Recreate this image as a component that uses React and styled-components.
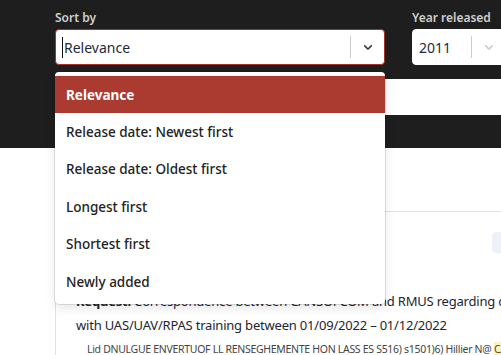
import React from "react";
import styled, { createGlobalStyle } from "styled-components";

const Global = createGlobalStyle`
  html, body {
    margin: 0;
    padding: 0;
    background: #ffffff;
    overflow: hidden;
  }
  body {
    font-family: "Noto Sans", "Open Sans", sans-serif;
    color: #222;
  }
`;

const SORT_OPTIONS = [
  "Relevance",
  "Release date: Newest first",
  "Release date: Oldest first",
  "Longest first",
  "Shortest first",
  "Newly added",
];

const Page = styled.div`
  position: relative;
  width: 501px;
  height: 355px;
  overflow: hidden;
`;

const Header = styled.header`
  background: #1e1e1e;
  height: 148px;
  padding: 10px 0 0 55px;
  box-sizing: border-box;
`;

const Filters = styled.div`
  display: flex;
  gap: 27px;
`;

const Field = styled.div`
  display: flex;
  flex-direction: column;
  gap: 3px;
  flex: 0 0 ${({ width }) => width}px;
`;

const Label = styled.label`
  font-size: 12px;
  font-weight: 600;
  color: #cfcfcf;
  line-height: 16px;
`;

const Select = styled.div`
  display: flex;
  align-items: center;
  height: 36px;
  box-sizing: border-box;
  background: #fff;
  border-radius: 4px;
  border: 1px solid ${({ focused }) => (focused ? "#a3312a" : "#fff")};
  padding-left: 6px;
`;

const Value = styled.div`
  flex: 1;
  display: flex;
  align-items: center;
  font-size: 14px;
  color: #1f2a3a;
`;

const Caret = styled.span`
  width: 1px;
  height: 21px;
  background: #111;
  margin-right: 1px;
`;

const Separator = styled.span`
  width: 1px;
  height: 22px;
  background: #cccccc;
`;

const Indicator = styled.span`
  width: 33px;
  display: flex;
  justify-content: center;
  align-items: center;
  color: ${({ muted }) => (muted ? "#cccccc" : "#333")};
`;

const SearchBar = styled.div`
  margin-top: 14px;
  height: 36px;
  background: #fff;
`;

const Menu = styled.ul`
  position: absolute;
  top: 72px;
  left: 55px;
  width: 330px;
  margin: 0;
  padding: 4px 0;
  list-style: none;
  background: #fff;
  border-radius: 4px;
  box-shadow: 0 0 0 1px rgba(0, 0, 0, 0.1), 0 4px 11px rgba(0, 0, 0, 0.1);
  z-index: 5;
`;

const Option = styled.li`
  height: 37.4px;
  display: flex;
  align-items: center;
  padding-left: 11px;
  font-size: 13.5px;
  font-weight: ${({ active }) => (active ? 700 : 500)};
  color: ${({ active }) => (active ? "#fff" : "#222")};
  background: ${({ active }) => (active ? "#ab3a30" : "transparent")};
`;

const Main = styled.main`
  padding: 63px 0 0 55px;
`;

const Card = styled.article`
  width: 520px;
  border-top: 1px solid #e2e2e2;
  border-left: 1px solid #e2e2e2;
  padding: 20px 23px 20px 20px;
  box-sizing: border-box;
  color: #1c2533;
`;

const CardTop = styled.div`
  display: flex;
  justify-content: flex-end;
`;

const Tag = styled.span`
  width: 60px;
  height: 21px;
  border-radius: 4px;
  background: #eef2f8;
`;

const Title = styled.p`
  margin: 36px 0 0;
  font-size: 13px;
  letter-spacing: -0.2px;
  line-height: 24px;
  white-space: nowrap;
  strong {
    font-weight: 700;
  }
`;

const Meta = styled.p`
  margin: 0;
  padding-left: 11px;
  font-size: 10.5px;
  letter-spacing: -0.3px;
  line-height: 24px;
  color: #444;
  white-space: nowrap;
  mark {
    background: #fdf3b8;
    color: inherit;
  }
`;

const Chevron = ({ size = 14 }) => (
  <svg width={size} height={size} viewBox="0 0 20 20" fill="currentColor">
    <path d="M4.516 7.548c0.436-0.446 1.043-0.481 1.576 0l3.908 3.747 3.908-3.747c0.533-0.481 1.141-0.446 1.574 0 0.436 0.445 0.408 1.197 0 1.615-0.406 0.418-4.695 4.502-4.695 4.502-0.217 0.223-0.502 0.335-0.787 0.335s-0.57-0.112-0.789-0.335c0 0-4.287-4.084-4.695-4.502s-0.436-1.17 0-1.615z" />
  </svg>
);

export default function App() {
  return (
    <Page>
      <Global />
      <Header>
        <Filters>
          <Field width={330}>
            <Label>Sort by</Label>
            <Select focused>
              <Value>
                <Caret />
                Relevance
              </Value>
              <Separator />
              <Indicator>
                <Chevron />
              </Indicator>
            </Select>
          </Field>
          <Field width={94}>
            <Label>Year released</Label>
            <Select>
              <Value>2011</Value>
              <Separator />
              <Indicator muted>
                <Chevron />
              </Indicator>
            </Select>
          </Field>
        </Filters>
        <SearchBar />
      </Header>

      <Menu>
        {SORT_OPTIONS.map((opt, i) => (
          <Option key={opt} active={i === 0}>
            {opt}
          </Option>
        ))}
      </Menu>

      <Main>
        <Card>
          <CardTop>
            <Tag />
          </CardTop>
          <Title>
            <strong>Request:</strong> Correspondence between CANSOFCOM and RMUS
            regarding course
            <br />
            with UAS/UAV/RPAS training between 01/09/2022 – 01/12/2022
          </Title>
          <Meta>
            Lid DNULGUE ENVERTUOF LL RENSEGHEMENTE HON LASS ES S516) s1501)6)
            Hillier N@ <mark>CANSOFCOM</mark>
          </Meta>
        </Card>
      </Main>
    </Page>
  );
}
